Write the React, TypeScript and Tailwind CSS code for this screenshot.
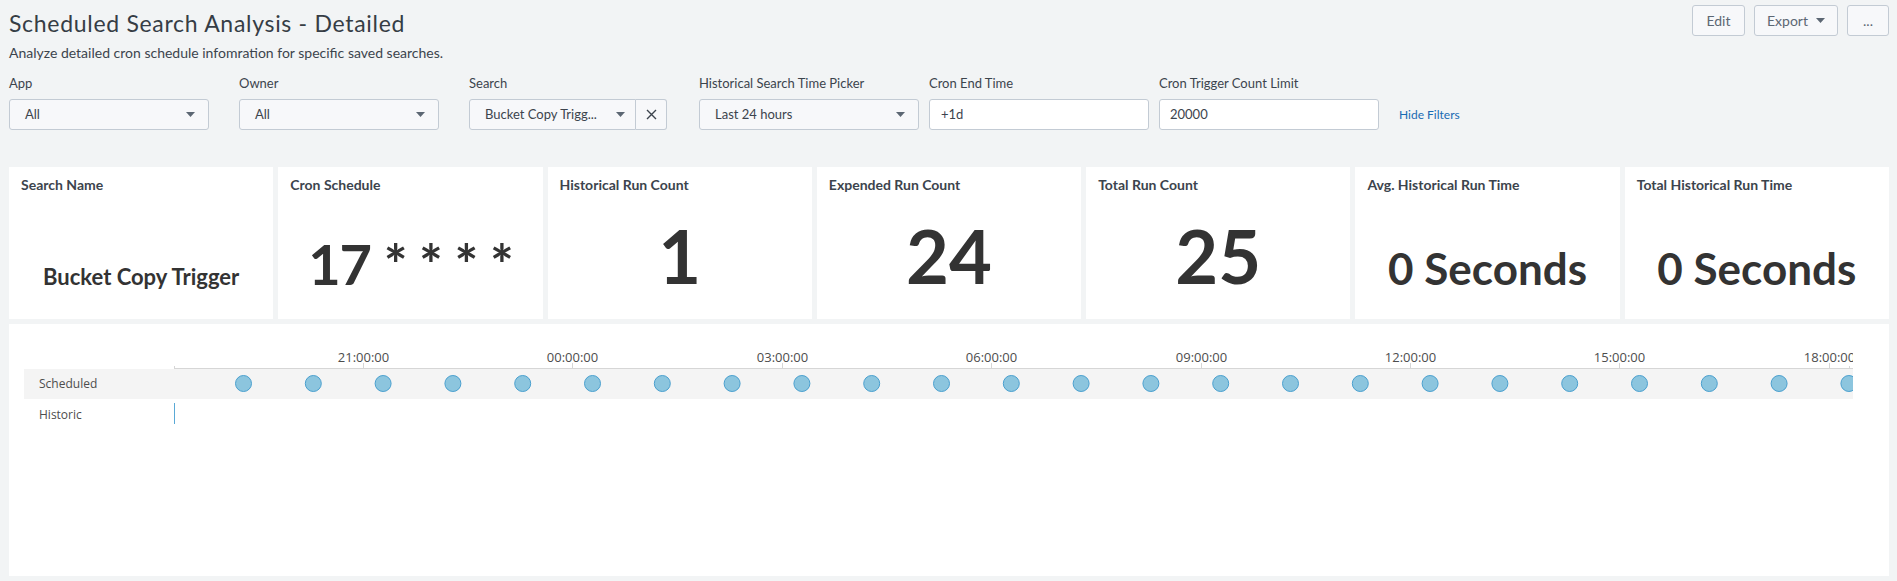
import React from "react";

const ui = { fontFamily: "Lato, 'Open Sans', sans-serif" };
const vis = { fontFamily: "'Open Sans', 'DejaVu Sans', sans-serif" };

// single value panels
const panels = [
  { title: "Search Name", value: "Bucket Copy Trigger", size: "text-[22px]", pb: "pb-[29px]" },
  { title: "Cron Schedule", value: "17 * * * *", size: "text-[56px] tracking-[-1px]", pb: "pb-[22px]" },
  { title: "Historical Run Count", value: "1", size: "text-[74px]", pb: "pb-[18px]" },
  { title: "Expended Run Count", value: "24", size: "text-[74px]", pb: "pb-[18px]" },
  { title: "Total Run Count", value: "25", size: "text-[74px]", pb: "pb-[18px]" },
  { title: "Avg. Historical Run Time", value: "0 Seconds", size: "text-[44px]", pb: "pb-[24px]" },
  { title: "Total Historical Run Time", value: "0 Seconds", size: "text-[44px]", pb: "pb-[24px]" },
];

const ticks = ["21:00:00", "00:00:00", "03:00:00", "06:00:00", "09:00:00", "12:00:00", "15:00:00", "18:00:00"];

const Caret = () => (
  <svg width="9" height="5" viewBox="0 0 9 5" className="shrink-0">
    <path d="M0 0 L9 0 L4.5 5 Z" fill="#5c6773" />
  </svg>
);

const Dropdown = ({ text, w = "w-[200px]" }: { text: string; w?: string }) => (
  <div className={`${w} h-[31px] flex items-center justify-between pl-[15px] pr-[13px] bg-[#f7f8fa] border border-[#c3cbd4] rounded-[3px] text-[13px] text-[#3c444d]`}>
    <span>{text}</span>
    <Caret />
  </div>
);

const Field = ({ label, children }: { label: string; children: React.ReactNode }) => (
  <div className="w-[230px] shrink-0">
    <div className="text-[13px] leading-[17px] text-[#3c444d] mb-[7px]">{label}</div>
    {children}
  </div>
);

export default function App() {
  return (
    <div className="w-full h-[581px] bg-[#f2f4f5] pl-[9px] pr-[8px] overflow-hidden" style={ui}>
      {/* header */}
      <div className="flex justify-between">
        <div className="pt-[10px]">
          <h1 className="text-[23px] leading-[27px] tracking-[0.7px] text-[#363d45]">Scheduled Search Analysis - Detailed</h1>
          <p className="mt-[8px] text-[14px] leading-[16px] text-[#3c444d]">
            Analyze detailed cron schedule infomration for specific saved searches.
          </p>
        </div>
        <div className="flex gap-[9px] pt-[5px]">
          <button className="w-[53px] h-[31px] bg-[#f7f8fa] border border-[#c3cbd4] rounded-[3px] text-[14px] text-[#5c6773]">Edit</button>
          <button className="w-[84px] h-[31px] flex items-center justify-center gap-[8px] bg-[#f7f8fa] border border-[#c3cbd4] rounded-[3px] text-[14px] text-[#5c6773]">
            Export <Caret />
          </button>
          <button className="w-[42px] h-[31px] bg-[#f7f8fa] border border-[#c3cbd4] rounded-[3px] text-[14px] text-[#5c6773]">...</button>
        </div>
      </div>

      {/* inputs */}
      <div className="flex items-end mt-[14px]">
        <Field label="App"><Dropdown text="All" /></Field>
        <Field label="Owner"><Dropdown text="All" /></Field>
        <Field label="Search">
          <div className="flex w-[198px] h-[31px]">
            <div className="flex-1 flex items-center justify-between pl-[15px] pr-[10px] bg-[#f7f8fa] border border-[#c3cbd4] rounded-l-[3px] text-[13px] text-[#3c444d]">
              <span>Bucket Copy Trigg...</span>
              <Caret />
            </div>
            <div className="w-[31px] flex items-center justify-center bg-[#f7f8fa] border border-l-0 border-[#c3cbd4] rounded-r-[3px]">
              <svg width="11" height="11" viewBox="0 0 11 11">
                <path d="M1 1 L10 10 M10 1 L1 10" stroke="#3c444d" strokeWidth="1.4" />
              </svg>
            </div>
          </div>
        </Field>
        <Field label="Historical Search Time Picker"><Dropdown text="Last 24 hours" w="w-[220px]" /></Field>
        <Field label="Cron End Time">
          <div className="w-[220px] h-[31px] flex items-center px-[11px] bg-white border border-[#c3cbd4] rounded-[3px] text-[13px] text-[#3c444d]">+1d</div>
        </Field>
        <Field label="Cron Trigger Count Limit">
          <div className="w-[220px] h-[31px] flex items-center px-[10px] bg-white border border-[#c3cbd4] rounded-[3px] text-[13px] text-[#3c444d]">20000</div>
        </Field>
        <div className="h-[31px] flex items-center text-[12px] text-[#1a6bb3] ml-[10px]">Hide Filters</div>
      </div>

      {/* single values */}
      <div className="flex gap-[5px] mt-[37px] h-[152px]">
        {panels.map((p, i) => (
          <div key={i} className="flex-1 bg-white flex flex-col">
            <div className="pt-[9px] px-[12px] text-[14px] leading-[17px] font-bold text-[#3c444d]">{p.title}</div>
            <div className={`flex-1 flex items-end justify-center ${p.pb}`}>
              <span className={`${p.size} leading-[1.2] font-bold text-[#333333] whitespace-nowrap`}>{p.value}</span>
            </div>
          </div>
        ))}
      </div>

      {/* timeline */}
      <div className="mt-[5px] h-[252px] bg-white" style={vis}>
        <div className="ml-[15px] w-[1829px]">
          <div className="flex h-[45px]">
            <div className="w-[150px] shrink-0" />
            <svg width="1679" height="45" className="block">
              <line x1="0" y1="44.5" x2="1679" y2="44.5" stroke="#d6d6d6" />
              <line x1="0.5" y1="42" x2="0.5" y2="45" stroke="#d6d6d6" />
              <line x1="1675.5" y1="42" x2="1675.5" y2="45" stroke="#d6d6d6" />
              {ticks.map((t, k) => {
                const x = Math.round(189 + k * 209.4) + 0.5;
                return (
                  <g key={t}>
                    <line x1={x} y1="39" x2={x} y2="45" stroke="#d6d6d6" />
                    <text x={x} y="37.5" textAnchor="middle" fontSize="13" fill="#4d4d4d">{t}</text>
                  </g>
                );
              })}
            </svg>
          </div>
          <div className="flex h-[30px] bg-[#f4f4f4]">
            <div className="w-[150px] shrink-0 pl-[15px] flex items-center text-[12px] text-[#4d4d4d]">Scheduled</div>
            <svg width="1679" height="30" className="block">
              {Array.from({ length: 24 }).map((_, i) => (
                <circle key={i} cx={69.5 + i * 69.8} cy="14.5" r="8" fill="#8cc5de" stroke="#4aa0cf" strokeWidth="1" />
              ))}
            </svg>
          </div>
          <div className="flex h-[31px]">
            <div className="w-[150px] shrink-0 pl-[15px] flex items-center text-[12px] text-[#4d4d4d]">Historic</div>
            <svg width="1679" height="31" className="block">
              <line x1="0.5" y1="4" x2="0.5" y2="25" stroke="#5aa9d6" />
            </svg>
          </div>
        </div>
      </div>
    </div>
  );
}
